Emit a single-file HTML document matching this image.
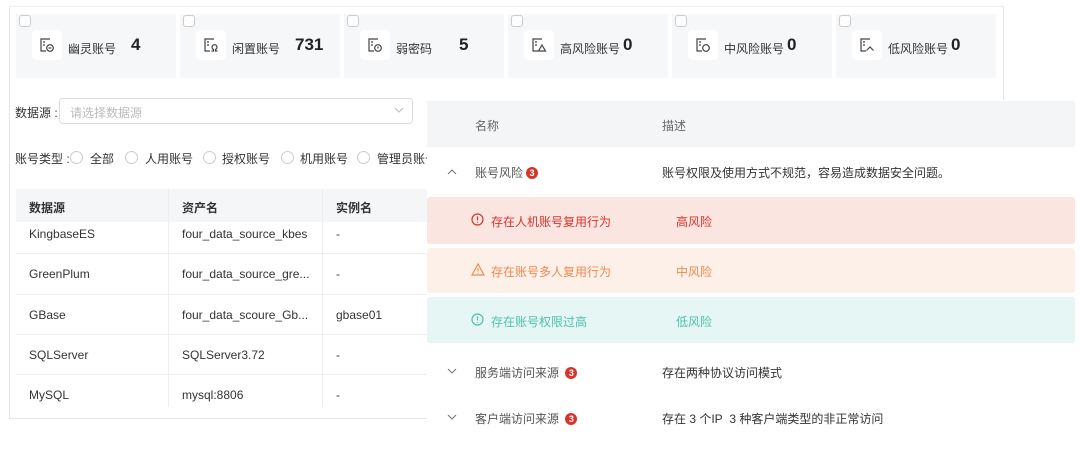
<!DOCTYPE html>
<html><head><meta charset="utf-8"><style>
*{box-sizing:border-box;margin:0;padding:0}
body{width:1080px;height:457px;background:#fff;position:relative;overflow:hidden;font-family:"Liberation Sans","Noto Sans CJK SC",sans-serif;color:#333;font-size:12px}
.a{position:absolute}
.card{position:absolute;top:14px;width:160px;height:64px;background:#f6f7f9}
.cb{position:absolute;left:3px;top:1px;width:12px;height:12px;border:1px solid #ccc;border-radius:3px;background:#fff}
.ib{position:absolute;left:16px;top:16px;width:30px;height:30px;background:#fff;border-radius:4px}
.ib svg{position:absolute;left:7px;top:7px}
.lbl{position:absolute;top:26px;font-size:12px;color:#333}
.num{position:absolute;top:21px;font-size:17px;font-weight:bold;color:#222}
.radio{position:absolute;top:151px;width:13px;height:13px;border:1px solid #ccc;border-radius:50%}
.td{position:absolute;font-size:12px;color:#333}
.hl{position:absolute;left:16px;width:411px;height:1px;background:#eee}
.badge{display:inline-block;width:12px;height:12px;border-radius:50%;background:#d9342b;color:#fff;font-size:9px;text-align:center;line-height:12px;font-weight:bold;vertical-align:1px;margin-left:3px}
.ic{position:absolute}
</style></head><body>
<div class="a" style="left:9px;top:6px;width:995px;height:413px;border:1px solid #e6e6e6;border-top-color:#eee"></div>

<div class="card" style="left:16px"><div class="cb"></div><div class="ib"><svg width="16" height="16" viewBox="0 0 16 16" fill="none" stroke="#444" stroke-width="1.2"><path d="M11 2H2v12h5"/><path d="M4 5h2M4 8h2"/><circle cx="11" cy="11" r="3.3"/><path d="M9.5 11h3"/></svg></div><div class="lbl" style="left:52px">幽灵账号</div><div class="num" style="left:115px">4</div></div>
<div class="card" style="left:180px"><div class="cb"></div><div class="ib"><svg width="16" height="16" viewBox="0 0 16 16" fill="none" stroke="#444" stroke-width="1.2"><path d="M11 2H2v12h5"/><path d="M4 5h2M4 8h2"/><path d="M8.5 14h2v-1.5a2.5 2.5 0 1 1 2 0V14h2"/></svg></div><div class="lbl" style="left:52px">闲置账号</div><div class="num" style="left:115px">731</div></div>
<div class="card" style="left:344px"><div class="cb"></div><div class="ib"><svg width="16" height="16" viewBox="0 0 16 16" fill="none" stroke="#444" stroke-width="1.2"><path d="M11 2H2v12h5"/><path d="M4 5h2M4 8h2"/><circle cx="11" cy="11" r="3.3"/><path d="M11 9.5v2"/></svg></div><div class="lbl" style="left:52px">弱密码</div><div class="num" style="left:115px">5</div></div>
<div class="card" style="left:508px"><div class="cb"></div><div class="ib"><svg width="16" height="16" viewBox="0 0 16 16" fill="none" stroke="#444" stroke-width="1.2"><path d="M11 2H2v12h5"/><path d="M4 5h2M4 8h2"/><path d="M11 8l3.5 6h-7z"/></svg></div><div class="lbl" style="left:52px">高风险账号</div><div class="num" style="left:115px">0</div></div>
<div class="card" style="left:672px"><div class="cb"></div><div class="ib"><svg width="16" height="16" viewBox="0 0 16 16" fill="none" stroke="#444" stroke-width="1.2"><path d="M11 2H2v12h5"/><path d="M4 5h2M4 8h2"/><circle cx="11" cy="11" r="3.3"/></svg></div><div class="lbl" style="left:52px">中风险账号</div><div class="num" style="left:115px">0</div></div>
<div class="card" style="left:836px"><div class="cb"></div><div class="ib"><svg width="16" height="16" viewBox="0 0 16 16" fill="none" stroke="#444" stroke-width="1.2"><path d="M11 2H2v12h5"/><path d="M4 5h2M4 8h2"/><path d="M7.5 13.5l3.5-3.5 3.5 3.5"/></svg></div><div class="lbl" style="left:52px">低风险账号</div><div class="num" style="left:115px">0</div></div>

<div class="a" style="left:15px;top:104px">数据源 :</div>
<div class="a" style="left:59px;top:98px;width:354px;height:26px;border:1px solid #dcdcdc;border-radius:4px;color:#bbb;padding:5px 10px">请选择数据源</div>
<svg class="ic" style="left:394px;top:107px" width="10" height="7" viewBox="0 0 10 7" fill="none" stroke="#bbb" stroke-width="1"><path d="M1 1l4 4 4-4"/></svg>
<div class="a" style="left:15px;top:150px;white-space:nowrap">账号类型 :</div>
<span class="radio" style="left:70px"></span><div class="td" style="left:90px;top:150px">全部</div>
<span class="radio" style="left:125px"></span><div class="td" style="left:145px;top:150px">人用账号</div>
<span class="radio" style="left:203px"></span><div class="td" style="left:222px;top:150px">授权账号</div>
<span class="radio" style="left:281px"></span><div class="td" style="left:300px;top:150px">机用账号</div>
<span class="radio" style="left:357px"></span><div class="td" style="left:377px;top:150px;white-space:nowrap">管理员账号</div>

<div class="a" style="left:16px;top:189px;width:411px;height:33px;background:#f5f6f8"></div>
<div class="a" style="left:168px;top:189px;width:1px;height:218px;background:#eee"></div>
<div class="a" style="left:322px;top:189px;width:1px;height:218px;background:#eee"></div>
<div class="td" style="left:29px;top:199px;font-weight:bold">数据源</div>
<div class="td" style="left:182px;top:199px;font-weight:bold">资产名</div>
<div class="td" style="left:336px;top:199px;font-weight:bold">实例名</div>
<div class="hl" style="top:253px"></div><div class="hl" style="top:294px"></div><div class="hl" style="top:334px"></div><div class="hl" style="top:374px"></div>
<div class="td" style="left:29px;top:227px">KingbaseES</div><div class="td" style="left:182px;top:227px">four_data_source_kbes</div><div class="td" style="left:336px;top:227px">-</div>
<div class="td" style="left:29px;top:267px">GreenPlum</div><div class="td" style="left:182px;top:267px">four_data_source_gre...</div><div class="td" style="left:336px;top:267px">-</div>
<div class="td" style="left:29px;top:308px">GBase</div><div class="td" style="left:182px;top:308px">four_data_scoure_Gb...</div><div class="td" style="left:336px;top:308px">gbase01</div>
<div class="td" style="left:29px;top:348px">SQLServer</div><div class="td" style="left:182px;top:348px">SQLServer3.72</div><div class="td" style="left:336px;top:348px">-</div>
<div class="td" style="left:29px;top:388px">MySQL</div><div class="td" style="left:182px;top:388px">mysql:8806</div><div class="td" style="left:336px;top:388px">-</div>

<!-- right overlay -->
<div class="a" style="left:427px;top:100px;width:653px;height:357px;background:#fff"></div>
<div class="a" style="left:427px;top:101px;width:648px;height:46px;background:#f4f5f7"></div>
<div class="td" style="left:475px;top:117px;color:#666">名称</div>
<div class="td" style="left:662px;top:117px;color:#666">描述</div>
<svg class="ic" style="left:447px;top:168px" width="10" height="7" viewBox="0 0 10 7" fill="none" stroke="#777" stroke-width="1.1"><path d="M1 6l4-4 4 4"/></svg>
<div class="td" style="left:475px;top:164px;color:#555">账号风险<span class="badge">3</span></div>
<div class="td" style="left:662px;top:164px;color:#333">账号权限及使用方式不规范，容易造成数据安全问题。</div>
<div class="a" style="left:427px;top:197px;width:648px;height:47px;background:#fbe5e1;border-radius:3px"></div>
<svg class="ic" style="left:471px;top:213px" width="13" height="13" viewBox="0 0 13 13" fill="none" stroke="#d9342b" stroke-width="1.2"><circle cx="6.5" cy="6.5" r="5.5"/><path d="M6.5 3.5v4M6.5 9v.8"/></svg>
<div class="td" style="left:491px;top:213px;color:#d9342b">存在人机账号复用行为</div><div class="td" style="left:676px;top:213px;color:#d9342b">高风险</div>
<div class="a" style="left:427px;top:248px;width:648px;height:45px;background:#fdf0e9;border-radius:3px"></div>
<svg class="ic" style="left:471px;top:263px" width="14" height="13" viewBox="0 0 14 13" fill="none" stroke="#ef8a4d" stroke-width="1.2"><path d="M7 1l6 11H1z"/><path d="M7 5v3.5M7 9.8v.8"/></svg>
<div class="td" style="left:491px;top:263px;color:#ef8a4d">存在账号多人复用行为</div><div class="td" style="left:676px;top:263px;color:#ef8a4d">中风险</div>
<div class="a" style="left:427px;top:297px;width:648px;height:46px;background:#e5f6f4;border-radius:3px"></div>
<svg class="ic" style="left:471px;top:313px" width="13" height="13" viewBox="0 0 13 13" fill="none" stroke="#4fc1ad" stroke-width="1.2"><circle cx="6.5" cy="6.5" r="5.5"/><path d="M6.5 3.5v4M6.5 9v.8"/></svg>
<div class="td" style="left:491px;top:313px;color:#4fc1ad">存在账号权限过高</div><div class="td" style="left:676px;top:313px;color:#4fc1ad">低风险</div>
<svg class="ic" style="left:447px;top:368px" width="10" height="7" viewBox="0 0 10 7" fill="none" stroke="#777" stroke-width="1.1"><path d="M1 1l4 4 4-4"/></svg>
<div class="td" style="left:475px;top:364px;color:#555">服务端访问来源 <span class="badge">3</span></div>
<div class="td" style="left:662px;top:364px;color:#333">存在两种协议访问模式</div>
<svg class="ic" style="left:447px;top:414px" width="10" height="7" viewBox="0 0 10 7" fill="none" stroke="#777" stroke-width="1.1"><path d="M1 1l4 4 4-4"/></svg>
<div class="td" style="left:475px;top:410px;color:#555">客户端访问来源 <span class="badge">3</span></div>
<div class="td" style="left:662px;top:410px;color:#333">存在 3 个IP&nbsp; 3 种客户端类型的非正常访问</div>
</body></html>
